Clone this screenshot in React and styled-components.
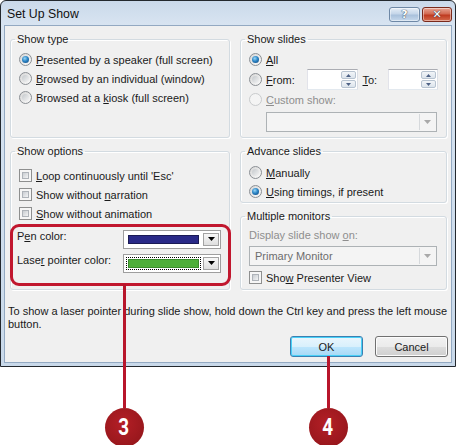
import React from 'react'
import styled, { createGlobalStyle } from 'styled-components'

const GlobalStyle = createGlobalStyle`
  html, body { margin: 0; padding: 0; background: #fff; }
  body {
    font-family: "Liberation Sans", Arial, sans-serif;
    font-size: 11px;
    color: #1a1a1a;
  }
`

const Page = styled.div`
  position: relative;
  width: 457px;
  height: 445px;
  overflow: hidden;
`

const Window = styled.div`
  box-sizing: border-box;
  width: 456px;
  height: 367px;
  border: 1px solid #23282e;
  border-radius: 6px 6px 0 0;
  padding: 0 3px 3px 3px;
  background: linear-gradient(#cad9ea, #d8e4f1 24px, #c9d9ea);
  display: flex;
  flex-direction: column;
`

const TitleBar = styled.div`
  height: 24px;
  display: flex;
  align-items: flex-start;
  padding-left: 3px;
`

const Title = styled.div`
  flex: 1;
  font-size: 12.3px;
  line-height: 26px;
  color: #111;
`

const CaptionButton = styled.div`
  box-sizing: border-box;
  margin-top: 6px;
  height: 15px;
  width: ${p => p.$w}px;
  margin-left: 2px;
  border: 1px solid ${p => (p.$close ? '#7a2a1c' : '#6e88a6')};
  border-radius: 3px;
  background: ${p =>
    p.$close
      ? 'linear-gradient(#e8a493, #d26a52 45%, #bf3a20 55%, #d56b4c)'
      : 'linear-gradient(#e6eef7, #c5d6e9 45%, #a9c1dc 55%, #c7d9ec)'};
  box-shadow: inset 0 0 0 1px rgba(255, 255, 255, 0.45);
  display: flex;
  align-items: center;
  justify-content: center;
  font-family: "DejaVu Sans", sans-serif;
  font-weight: bold;
  font-size: 11px;
  color: #fff;
  text-shadow: 0 0 1px #2c3c50, 0 0 1px #2c3c50;
`

const Client = styled.div`
  flex: 1;
  box-sizing: border-box;
  border: 1px solid #93a9c2;
  background: #f0f0f0;
  padding: 6px 3px 5px 5px;
  display: flex;
  flex-direction: column;
`

const Columns = styled.div`
  display: grid;
  grid-template-columns: 220px 207px;
  column-gap: 10px;
`

const Column = styled.div`
  display: flex;
  flex-direction: column;
  gap: 6px;
`

const Group = styled.fieldset`
  box-sizing: border-box;
  margin: 0;
  height: ${p => p.$h}px;
  padding: ${p => p.$pt || 4}px 8px 0 8px;
  border: 1px solid #d3dbe1;
  border-radius: 3px;
  box-shadow: inset 1px 1px 0 #fff, 1px 1px 0 #fff;
  min-width: 0;
`

const Legend = styled.legend`
  margin-left: -4px;
  padding: 0 2px;
  line-height: 14px;
  color: #1a1a1a;
`

const Row = styled.div`
  display: flex;
  align-items: center;
  height: ${p => p.$h || 19}px;
  gap: 4px;
`

const Label = styled.span`
  color: ${p => (p.$disabled ? '#8e8e8e' : '#1a1a1a')};
  white-space: nowrap;
  width: ${p => (p.$w ? `${p.$w}px` : 'auto')};
  flex: none;
`

const Acc = styled.span`
  text-decoration: underline;
  text-underline-offset: 1px;
`

const Radio = styled.span`
  position: relative;
  flex: none;
  box-sizing: border-box;
  width: 13px;
  height: 13px;
  border-radius: 50%;
  border: 1px solid ${p => (p.$disabled ? '#c9cbcd' : '#8b8f94')};
  background: ${p => (p.$disabled ? '#f4f4f4' : 'linear-gradient(135deg, #d6d6d6, #fbfbfb)')};
  &::after {
    content: '';
    position: absolute;
    inset: 2px;
    border-radius: 50%;
    background: ${p =>
      p.$checked
        ? 'radial-gradient(circle at 40% 35%, #9ad7f7 0, #2d86c6 45%, #0b3d75 100%)'
        : p.$disabled
        ? '#f4f4f4'
        : 'linear-gradient(135deg, #c4c8cc, #f4f4f4)'};
  }
`

const Check = styled.span`
  flex: none;
  box-sizing: border-box;
  width: 13px;
  height: 13px;
  border: 1px solid #8e8f8f;
  background: #f6f6f6;
  padding: 2px;
  &::after {
    content: '';
    display: block;
    width: 100%;
    height: 100%;
    box-sizing: border-box;
    border: 1px solid #aeb3b9;
    background: linear-gradient(135deg, #c9cdd2, #f3f4f5);
  }
`

const SpinBox = styled.div`
  box-sizing: border-box;
  width: ${p => p.$w}px;
  height: 21px;
  border: 1px solid #abadb3;
  border-color: #abadb3 #dbdfe6 #e3e9ef #e2e3ea;
  background: #fff;
  display: flex;
  justify-content: flex-end;
  padding: 1px;
`

const SpinButtons = styled.div`
  width: 15px;
  display: flex;
  flex-direction: column;
  gap: 1px;
`

const SpinHalf = styled.div`
  flex: 1;
  box-sizing: border-box;
  border: 1px solid #b7c3d0;
  border-radius: 2px;
  background: linear-gradient(#f2f5f8, #dce4ec);
  display: flex;
  align-items: center;
  justify-content: center;
`

const Combo = styled.div`
  box-sizing: border-box;
  width: ${p => p.$w}px;
  height: 20px;
  margin-left: ${p => p.$ml || 0}px;
  border: 1px solid #adb2b5;
  background: #f4f4f4;
  display: flex;
  align-items: center;
  padding: 1px;
  color: #6d6d6d;
`

const ComboText = styled.span`
  flex: 1;
  padding-left: 4px;
`

const ComboButton = styled.div`
  width: 15px;
  height: 100%;
  border-left: 1px solid #d6d9dc;
  display: flex;
  align-items: center;
  justify-content: center;
`

const Note = styled.div`
  margin: 15px 0 0 -2px;
  line-height: 13px;
  color: #1a1a1a;
`

const ButtonRow = styled.div`
  margin-top: 5px;
  display: flex;
  justify-content: flex-end;
  gap: 12px;
`

const DialogButton = styled.div`
  box-sizing: border-box;
  width: 73px;
  height: 21px;
  border: 1px solid ${p => (p.$default ? '#3c7fb1' : '#707070')};
  border-radius: 3px;
  background: ${p =>
    p.$default
      ? 'linear-gradient(#eaf6fd, #d9f0fc 50%, #bee6fd 50%, #a7d9f5)'
      : 'linear-gradient(#f2f2f2, #ebebeb 50%, #dddddd 50%, #cfcfcf)'};
  box-shadow: inset 0 0 0 1px ${p => (p.$default ? '#48d1f8' : '#fcfcfc')};
  display: flex;
  align-items: center;
  justify-content: center;
  color: #1a1a1a;
`

const ColorRows = styled.div`
  position: relative;
  margin: 5px 0 0 -2px;
  display: flex;
  flex-direction: column;
  gap: 2px;
  &::after {
    content: '';
    position: absolute;
    left: -7px;
    right: -10px;
    top: -4px;
    bottom: -12px;
    border: 3px solid #c1172e;
    border-radius: 9px;
  }
`

const ColorRow = styled.div`
  height: 22px;
  display: flex;
  align-items: center;
  justify-content: space-between;
`

const ColorLabel = styled.span`
  margin-top: -6px;
`

const ColorCombo = styled.div`
  box-sizing: border-box;
  width: 98px;
  height: 19px;
  border: 1px solid #9e9e9e;
  background: #fff;
  display: flex;
  align-items: stretch;
  padding: 2px 1px 2px 2px;
  gap: 2px;
`

const SwatchFrame = styled.div`
  flex: 1;
  box-sizing: border-box;
  padding: 1px;
  border: 1px dotted ${p => (p.$focus ? '#000' : 'transparent')};
  display: flex;
`

const Swatch = styled.div`
  flex: 1;
  background: ${p => p.$color};
  border: 1px solid ${p => p.$edge};
`

const DropButton = styled.div`
  width: 16px;
  box-sizing: border-box;
  border: 1px solid #a3a3a3;
  background: linear-gradient(#f7f7f7, #dedede);
  display: flex;
  align-items: center;
  justify-content: center;
`

const Callout = styled.div`
  position: absolute;
  left: ${p => p.$x - 20}px;
  top: ${p => p.$top}px;
  width: 40px;
  display: flex;
  flex-direction: column;
  align-items: center;
`

const Leader = styled.div`
  width: 3px;
  height: ${p => p.$h}px;
  background: #b8162b;
`

const Badge = styled.div`
  width: 39px;
  height: 39px;
  border-radius: 50%;
  background: radial-gradient(circle at 45% 40%, #b41f26, #8e1419);
  display: flex;
  align-items: center;
  justify-content: center;
  color: #fff;
  font-family: Roboto, "Liberation Sans", sans-serif;
  font-weight: 700;
  font-size: 23px;
  transform-origin: center;
  span { display: inline-block; transform: scaleX(0.82); }
`

const Arrow = ({ dir = 'down', color = '#000', w = 7, h = 4 }) => (
  <svg width={w} height={h} viewBox={`0 0 ${w} ${h}`}>
    {dir === 'down' ? (
      <polygon points={`0,0 ${w},0 ${w / 2},${h}`} fill={color} />
    ) : (
      <polygon points={`0,${h} ${w},${h} ${w / 2},0`} fill={color} />
    )}
  </svg>
)

const Spin = ({ w }) => (
  <SpinBox $w={w}>
    <SpinButtons>
      <SpinHalf><Arrow dir="up" color="#4d6185" w={5} h={3} /></SpinHalf>
      <SpinHalf><Arrow color="#4d6185" w={5} h={3} /></SpinHalf>
    </SpinButtons>
  </SpinBox>
)

const ColorPicker = ({ color, edge, focus }) => (
  <ColorCombo>
    <SwatchFrame $focus={focus}>
      <Swatch $color={color} $edge={edge} />
    </SwatchFrame>
    <DropButton><Arrow w={7} h={4} /></DropButton>
  </ColorCombo>
)

export default function App() {
  return (
    <Page>
      <GlobalStyle />
      <Window>
        <TitleBar>
          <Title>Set Up Show</Title>
          <CaptionButton $w={31}>?</CaptionButton>
          <CaptionButton $w={30} $close>✕</CaptionButton>
        </TitleBar>
        <Client>
          <Columns>
            <Column>
              <Group $h={106}>
                <Legend>Show type</Legend>
                <Row><Radio $checked /><Label><Acc>P</Acc>resented by a speaker (full screen)</Label></Row>
                <Row><Radio /><Label><Acc>B</Acc>rowsed by an individual (window)</Label></Row>
                <Row><Radio /><Label>Browsed at a <Acc>k</Acc>iosk (full screen)</Label></Row>
              </Group>
              <Group $h={146} $pt={8}>
                <Legend>Show options</Legend>
                <Row><Check /><Label><Acc>L</Acc>oop continuously until 'Esc'</Label></Row>
                <Row><Check /><Label>Show without <Acc>n</Acc>arration</Label></Row>
                <Row><Check /><Label><Acc>S</Acc>how without animation</Label></Row>
                <ColorRows>
                  <ColorRow>
                    <ColorLabel>P<Acc>e</Acc>n color:</ColorLabel>
                    <ColorPicker color="#2a2a88" edge="#1a1a55" />
                  </ColorRow>
                  <ColorRow>
                    <ColorLabel>Lase<Acc>r</Acc> pointer color:</ColorLabel>
                    <ColorPicker color="#4eae3a" edge="#3a8a2c" focus />
                  </ColorRow>
                </ColorRows>
              </Group>
            </Column>
            <Column>
              <Group $h={106}>
                <Legend>Show slides</Legend>
                <Row><Radio $checked /><Label><Acc>A</Acc>ll</Label></Row>
                <Row $h={21}>
                  <Radio />
                  <Label $w={37}><Acc>F</Acc>rom:</Label>
                  <Spin w={51} />
                  <Label $w={21} style={{ marginLeft: 1 }}><Acc>T</Acc>o:</Label>
                  <Spin w={51} />
                </Row>
                <Row><Radio $disabled /><Label $disabled><Acc>C</Acc>ustom show:</Label></Row>
                <Combo $w={171} $ml={17} style={{ marginTop: 3 }}>
                  <ComboText />
                  <ComboButton><Arrow color="#a9a9a9" /></ComboButton>
                </Combo>
              </Group>
              <Group $h={59} $pt={5}>
                <Legend>Advance slides</Legend>
                <Row><Radio /><Label><Acc>M</Acc>anually</Label></Row>
                <Row><Radio $checked /><Label><Acc>U</Acc>sing timings, if present</Label></Row>
              </Group>
              <Group $h={81} $pt={5}>
                <Legend>Multiple monitors</Legend>
                <Row $h={14}><Label $disabled>Display slide show <Acc>o</Acc>n:</Label></Row>
                <Combo $w={188} style={{ marginTop: 4 }}>
                  <ComboText>Primary Monitor</ComboText>
                  <ComboButton><Arrow color="#a9a9a9" /></ComboButton>
                </Combo>
                <Row style={{ marginTop: 2 }}><Check /><Label>Sho<Acc>w</Acc> Presenter View</Label></Row>
              </Group>
            </Column>
          </Columns>
          <Note>
            To show a laser pointer during slide show, hold down the Ctrl key and press the left mouse
            <br />
            button.
          </Note>
          <ButtonRow>
            <DialogButton $default>OK</DialogButton>
            <DialogButton>Cancel</DialogButton>
          </ButtonRow>
        </Client>
      </Window>
      <Callout $x={124} $top={284}>
        <Leader $h={124} />
        <Badge><span>3</span></Badge>
      </Callout>
      <Callout $x={328} $top={356}>
        <Leader $h={52} />
        <Badge><span>4</span></Badge>
      </Callout>
    </Page>
  )
}
